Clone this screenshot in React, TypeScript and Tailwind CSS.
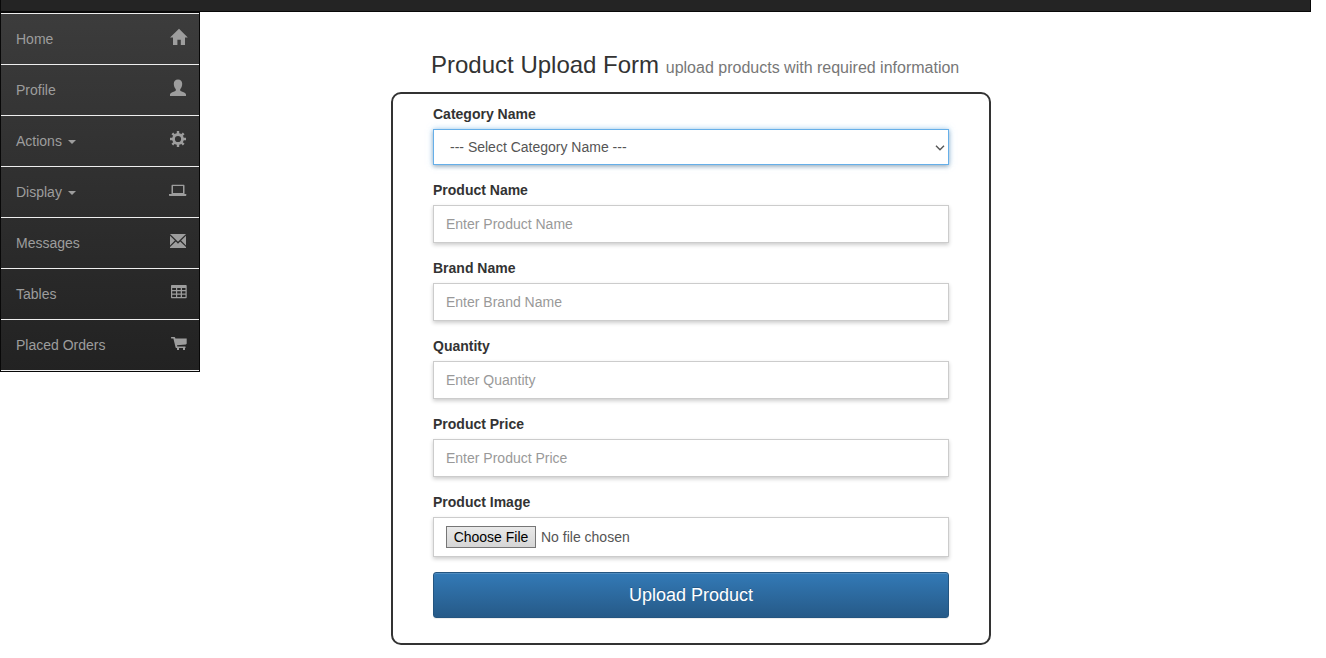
import type { ReactNode } from "react";

type NavItem = { label: string; icon: ReactNode; menu?: boolean };

const navItems: NavItem[] = [
  {
    label: "Home",
    icon: <path d="M11 1.7 19.8 10.6H17V18h-4.2v-5.2H9.4V18H5v-7.4H2z" />,
  },
  {
    label: "Profile",
    icon: (
      <path d="M10 1.4c2.7 0 4.2 1.8 4.2 4.4 0 2.2-.7 4-1.9 5.1-.3 1.2-.1 1.9.9 2.3l3 1.2c1.1.5 1.8 1.2 1.8 2.4V18H2v-1.2c0-1.2.7-1.9 1.8-2.4l3-1.2c1-.4 1.200-1.100.9-2.300-1.200-1.100-1.900-2.900-1.900-5.100 0-2.600 1.500-4.400 4.200-4.400z" />
    ),
  },
  {
    label: "Actions",
    menu: true,
    icon: (
      <g fill="none" stroke="currentColor">
        <circle cx="10" cy="10" r="4.500" strokeWidth="2.800" />
        <path
          strokeWidth="2.400"
          d="M10 2v3M10 15v3M2 10h3M15 10h3M4.300 4.300l2.200 2.200M13.500 13.500l2.200 2.200M4.300 15.700l2.200-2.200M13.500 6.500l2.200-2.200"
        />
      </g>
    ),
  },
  {
    label: "Display",
    menu: true,
    icon: (
      <path
        fillRule="evenodd"
        d="M4.500 4.700h11c.6 0 1 .4 1 1V14H18.300v1c0 .6-.4 1-1 1H2c-.6 0-1-.4-1-1v-1h2.500V5.700c0-.6.4-1 1-1zM5 6v7h10V6z"
      />
    ),
  },
  {
    label: "Messages",
    icon: (
      <path d="M2 3h16l-8 7.800zM2 4.800 6.900 9.600 2 14.400zM18 4.800v9.600l-4.900-4.800zM7.800 10.500 10 12.700l2.200-2.200L18 16v1H2v-1z" />
    ),
  },
  {
    label: "Tables",
    icon: (
      <path
        fillRule="evenodd"
        d="M4 3h13.700c.6 0 1 .4 1 1v11.300c0 .6-.4 1-1 1H4c-.6 0-1-.4-1-1V4c0-.6.4-1 1-1zM4.200 6v2H8V6zM9.200 6v2h3.500V6zM14 6v2h3.500V6zM4.200 9.300v2.200H8V9.300zM9.200 9.300v2.200h3.500V9.300zM14 9.300v2.200h3.500V9.300zM4.200 12.800v2.200H8v-2.200zM9.200 12.800v2.200h3.500v-2.200zM14 12.800v2.200h3.500v-2.200z"
      />
    ),
  },
  {
    label: "Placed Orders",
    icon: (
      <path d="M3.600 4h2.800c.4 0 .6.2.7.5l.3 1H18.700V10.500c0 .5-.3.8-.8.9L9 12.300l.3 1.300h8.200V15H17v2h-2v-2h-4v2H9v-2h-.8c-.3 0-.5-.2-.6-.5L5.400 5.500H3.600c-.9 0-.9-1.500 0-1.500z" />
    ),
  },
];

const fields = [
  { id: "product-name", label: "Product Name", placeholder: "Enter Product Name" },
  { id: "brand-name", label: "Brand Name", placeholder: "Enter Brand Name" },
  { id: "quantity", label: "Quantity", placeholder: "Enter Quantity" },
  { id: "product-price", label: "Product Price", placeholder: "Enter Product Price" },
];

function Sidebar() {
  return (
    <nav className="w-[200px] shrink-0 border border-[#080808] bg-linear-to-b from-[#3c3c3c] to-[#222222]">
      <ul className="border-t border-[#eeeeee]">
        {navItems.map((item) => (
          <li key={item.label} className="border-b border-[#eeeeee]">
            <a href="#" className="flex justify-between pr-[11px] pl-[15px] text-[#9d9d9d]">
              <span className="flex items-center gap-1.5 py-[15px] leading-5">
                {item.label}
                {item.menu && (
                  <span className="mt-0.5 border-x-4 border-t-4 border-x-transparent border-t-[#9d9d9d]" />
                )}
              </span>
              <svg viewBox="0 0 20 20" className="mt-[13px] size-5 fill-current" aria-hidden="true">
                {item.icon}
              </svg>
            </a>
          </li>
        ))}
      </ul>
    </nav>
  );
}

function Field({ id, label, children }: { id: string; label: string; children: ReactNode }) {
  return (
    <div className="mb-[15px]">
      <label htmlFor={id} className="mb-[5px] block leading-5 font-bold">
        {label}
      </label>
      {children}
    </div>
  );
}

function ProductForm() {
  return (
    <form
      className="rounded-[10px] border-2 border-[#333333] px-10 pt-2.5 pb-[25px]"
      onSubmit={(event) => event.preventDefault()}
    >
      <Field id="category" label="Category Name">
        <div className="relative">
          <select
            id="category"
            className="block h-9 w-full appearance-none border border-[#66afe9] bg-white px-4 text-[#555555] shadow-[0_2px_4px_rgba(0,0,0,0.2),0_0_6px_rgba(102,175,233,0.6)] outline-none"
          >
            <option>--- Select Category Name ---</option>
          </select>
          <svg
            viewBox="0 0 10 6"
            className="pointer-events-none absolute top-4 right-1 h-1.5 w-2.5 fill-none stroke-[#555555]"
            aria-hidden="true"
          >
            <path d="M1 .7 5 4.700 9 .7" strokeWidth="1.400" />
          </svg>
        </div>
      </Field>
      {fields.map((field) => (
        <Field key={field.id} id={field.id} label={field.label}>
          <input
            id={field.id}
            type="text"
            placeholder={field.placeholder}
            className="block h-[38px] w-full border border-[#cccccc] bg-white px-3 text-[#555555] shadow-[0_2px_4px_rgba(0,0,0,0.2)] placeholder:text-[#999999]"
          />
        </Field>
      ))}
      <Field id="product-image" label="Product Image">
        <input
          id="product-image"
          type="file"
          className="block h-10 w-full border border-[#cccccc] bg-white px-3 py-2 leading-5 text-[#555555] shadow-[0_2px_4px_rgba(0,0,0,0.2)] file:me-[5px] file:h-[22px] file:w-[90px] file:border file:border-solid file:border-[#767676] file:bg-linear-to-b file:from-[#e9e9e9] file:to-[#d6d6d6] file:text-black"
        />
      </Field>
      <button
        type="submit"
        className="block h-[46px] w-full rounded-[3px] border border-[#245580] bg-linear-to-b from-[#337ab7] to-[#265a88] text-lg text-white shadow-[inset_0_1px_0_rgba(255,255,255,0.15),0_1px_1px_rgba(0,0,0,0.075)] [text-shadow:0_-1px_0_rgba(0,0,0,0.2)]"
      >
        Upload Product
      </button>
    </form>
  );
}

export default function App() {
  return (
    <div className="mr-[15px] font-['Liberation_Sans',Arial,sans-serif] text-sm text-[#333333]">
      <header className="h-3 border-x border-b border-[#080808] bg-[#242424]" />
      <div className="flex items-start">
        <Sidebar />
        <main className="ml-[191px] w-full max-w-[600px] pt-[38px]">
          <h1 className="mb-3 pl-10 text-2xl leading-[30px]">
            Product Upload Form{" "}
            <small className="text-base leading-none text-[#777777]">
              upload products with required information
            </small>
          </h1>
          <ProductForm />
        </main>
      </div>
    </div>
  );
}
